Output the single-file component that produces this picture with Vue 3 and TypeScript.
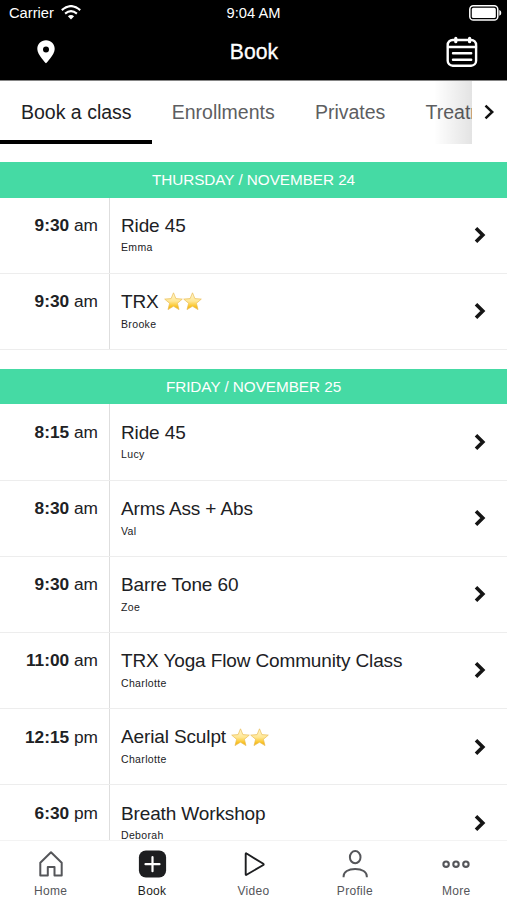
<script setup lang="ts">
interface ClassItem {
  time: string
  period: string
  title: string
  teacher: string
  stars?: number
}

interface Day {
  label: string
  classes: ClassItem[]
}

const tabs: string[] = ['Book a class', 'Enrollments', 'Privates', 'Treatments']

const days: Day[] = [
  {
    label: 'THURSDAY / NOVEMBER 24',
    classes: [
      { time: '9:30', period: 'am', title: 'Ride 45', teacher: 'Emma' },
      { time: '9:30', period: 'am', title: 'TRX', teacher: 'Brooke', stars: 2 },
    ],
  },
  {
    label: 'FRIDAY / NOVEMBER 25',
    classes: [
      { time: '8:15', period: 'am', title: 'Ride 45', teacher: 'Lucy' },
      { time: '8:30', period: 'am', title: 'Arms Ass + Abs', teacher: 'Val' },
      { time: '9:30', period: 'am', title: 'Barre Tone 60', teacher: 'Zoe' },
      { time: '11:00', period: 'am', title: 'TRX Yoga Flow Community Class', teacher: 'Charlotte' },
      { time: '12:15', period: 'pm', title: 'Aerial Sculpt', teacher: 'Charlotte', stars: 2 },
      { time: '6:30', period: 'pm', title: 'Breath Workshop', teacher: 'Deborah' },
    ],
  },
]

const navItems: string[] = ['Home', 'Book', 'Video', 'Profile', 'More']
</script>

<template>
  <div class="screen">
    <header class="top">
      <div class="status">
        <div class="carrier">
          <span>Carrier</span>
          <svg class="wifi" width="20" height="15" viewBox="0 0 20 15" fill="none" stroke="#fff" stroke-width="2.1">
            <path d="M.8 5.1Q10-3 19.2 5.1" />
            <path d="M4.1 8.6q5.9-4.9 11.8 0" />
            <path d="M6.9 11.3Q10 8.8 13.1 11.3L10 14.5Z" fill="#fff" stroke="none" />
          </svg>
        </div>
        <span class="clock">9:04 AM</span>
        <svg class="battery" width="33" height="16" viewBox="0 0 33 16">
          <rect x=".8" y=".8" width="28" height="14.2" rx="3.6" fill="none" stroke="#fff" stroke-width="1.5" />
          <rect x="2.8" y="2.8" width="24" height="10.2" rx="1.6" fill="#fff" />
          <path d="M30.3 5q2 .8 2 2.9t-2 2.9Z" fill="#fff" />
        </svg>
      </div>
      <div class="titlebar">
        <svg class="pin" width="18" height="24" viewBox="0 0 18 24">
          <path fill="#fff" fill-rule="evenodd" d="M9 .3C4 .3.3 4 .3 8.9.3 14.7 9 23.3 9 23.3s8.7-8.6 8.7-14.4C17.7 4 14 .3 9 .3Zm0 6.2a3 3 0 1 1 0 6 3 3 0 0 1 0-6Z" />
        </svg>
        <h1>Book</h1>
        <svg class="calendar" width="32" height="32" viewBox="0 0 32 32" fill="none" stroke="#fff" stroke-width="2.4" stroke-linecap="round">
          <rect x="1.7" y="4" width="28.4" height="25.7" rx="5" />
          <path d="M2 11h28M7 17.3h18.2M7 23.7h18.2" />
          <path d="M9.8 2.3v3.4M23.6 2.3v3.4" stroke-width="3.2" />
        </svg>
      </div>
    </header>

    <nav class="tabs">
      <div class="tab-track">
        <span v-for="(tab, i) in tabs" :key="tab" class="tab" :class="{ active: i === 0 }">{{ tab }}</span>
      </div>
      <div class="tab-next">
        <svg width="11" height="16" viewBox="0 0 11 16" fill="none" stroke="#111" stroke-width="2.5">
          <path d="M1.5 1.6 8.2 8l-6.7 6.4" />
        </svg>
      </div>
    </nav>

    <main class="schedule">
      <section v-for="day in days" :key="day.label" class="day">
        <h2>{{ day.label }}</h2>
        <div v-for="item in day.classes" :key="item.time + item.title" class="row">
          <div class="time"><b>{{ item.time }}</b> {{ item.period }}</div>
          <div class="info">
            <div class="name">
              <span>{{ item.title }}</span>
              <span v-if="item.stars" class="stars">
                <svg v-for="n in item.stars" :key="n" width="19" height="19" viewBox="0 0 19 19">
                  <defs>
                    <linearGradient id="starFill" x1="0" y1="0" x2="0" y2="1">
                      <stop offset="0" stop-color="#fff6d0" />
                      <stop offset=".5" stop-color="#ffe795" />
                      <stop offset=".8" stop-color="#fbc62a" />
                      <stop offset="1" stop-color="#eda90c" />
                    </linearGradient>
                  </defs>
                  <path
                    d="m9.5.8 2.4 5.8 6.4.5-4.9 4.2 1.6 6.3-5.5-3.4L4 17.6l1.6-6.3L.7 7.1l6.4-.5Z"
                    fill="url(#starFill)"
                    stroke="#e9bd55"
                    stroke-width=".7"
                    stroke-linejoin="round"
                  />
                </svg>
              </span>
            </div>
            <div class="teacher">{{ item.teacher }}</div>
          </div>
          <svg class="go" width="12" height="18" viewBox="0 0 12 18" fill="none" stroke="#151515" stroke-width="3.6">
            <path d="M2 2.3 8.8 9 2 15.7" />
          </svg>
        </div>
      </section>
    </main>

    <footer class="bottom">
      <div v-for="item in navItems" :key="item" class="nav" :class="{ selected: item === 'Book' }">
        <svg width="30" height="30" viewBox="0 0 30 30" fill="none" stroke="#55565a" stroke-width="2">
          <path v-if="item === 'Home'" d="M4.3 13.8 15 3.3l10.7 10.5v12.6h-7.2v-8.5h-6.7v8.5H4.3Z" stroke-linejoin="round" />
          <template v-else-if="item === 'Book'">
            <rect x="1.9" y="1.4" width="27.2" height="27.2" rx="7" fill="#1d1e20" stroke="none" />
            <path d="M15.5 8.2v14M8.5 15.2h14" stroke="#fff" stroke-width="2.2" stroke-linecap="round" />
          </template>
          <path v-else-if="item === 'Video'" d="M6.7 4.9v20.4q0 1 .9.4L24.3 16q.8-.6 0-1.2L7.6 4.5q-.9-.6-.9.4Z" stroke="#1d1e20" stroke-width="1.9" />
          <template v-else-if="item === 'Profile'">
            <ellipse cx="15.2" cy="8.2" rx="5.3" ry="6.1" />
            <path d="M3.6 28.2v-1c0-4.3 4.5-7.2 11.6-7.2s11.6 2.9 11.6 7.2v1" />
          </template>
          <template v-else>
            <circle cx="5.1" cy="15.2" r="2.7" stroke-width="2.1" />
            <circle cx="15" cy="15.2" r="2.7" stroke-width="2.1" />
            <circle cx="24.9" cy="15.2" r="2.7" stroke-width="2.1" />
          </template>
        </svg>
        <span>{{ item }}</span>
      </div>
    </footer>
  </div>
</template>

<style>
body {
  background: #fff;
}
</style>

<style scoped>
.screen {
  display: flex;
  flex-direction: column;
  width: 507px;
  height: 900px;
  overflow: hidden;
  background: #fff;
  color: #202124;
  font-family: "Liberation Sans", Arial, sans-serif;
}

svg {
  display: block;
  flex: none;
}

.top {
  flex: none;
  height: 80px;
  background: #000;
  color: #fff;
}

.status {
  display: grid;
  grid-template-columns: 1fr auto 1fr;
  align-items: center;
  height: 25px;
  padding: 0 5px 0 9px;
  font-size: 14.7px;
}

.carrier {
  display: flex;
  align-items: center;
  gap: 7px;
}

.clock {
  margin-left: -4px;
}

.battery {
  justify-self: end;
}

.titlebar {
  display: grid;
  grid-template-columns: 1fr auto 1fr;
  align-items: center;
  height: 54px;
  padding: 0 29px 0 37px;
}

h1 {
  margin: 0 0 0 -7px;
  font-size: 21.2px;
  font-weight: 400;
  -webkit-text-stroke: 0.3px currentColor;
}

.calendar {
  justify-self: end;
}

.tabs {
  display: flex;
  flex: none;
  height: 64px;
  border-top: 1px solid #858585;
  box-sizing: border-box;
}

.tab-track {
  position: relative;
  display: flex;
  width: 472px;
  overflow: hidden;
}

.tab-track::after {
  position: absolute;
  top: 0;
  right: 0;
  width: 38px;
  height: 100%;
  background: linear-gradient(90deg, rgba(0, 0, 0, 0), rgba(0, 0, 0, 0.11));
  content: "";
}

.tab {
  flex: none;
  padding: 0 20.1px;
  border-bottom: 4px solid transparent;
  color: #5d5e61;
  font-size: 19.5px;
  line-height: 62px;
  box-sizing: border-box;
}

.tab.active {
  border-color: #000;
  color: #202124;
  padding-left: 21px;
}

.tab-next {
  display: flex;
  flex: 1;
  justify-content: center;
  padding-top: 23px;
}

.schedule {
  flex: 1;
  min-height: 0;
  padding-top: 18px;
  overflow: hidden;
}

.day {
  margin-bottom: 19px;
}

h2 {
  margin: 0;
  height: 35.5px;
  background: #45daa4;
  color: #fff;
  font-size: 15.3px;
  font-weight: 400;
  line-height: 36px;
  letter-spacing: -0.05px;
  text-align: center;
}

.row {
  display: flex;
  height: 76.2px;
  border-bottom: 1px solid #ededed;
  box-sizing: border-box;
}

.time {
  width: 109.5px;
  padding: 17.5px 10.5px 0 0;
  border-right: 1px solid #dedede;
  box-sizing: border-box;
  font-size: 17.3px;
  line-height: 20px;
  text-align: right;
}

.info {
  flex: 1;
  padding: 17.2px 0 0 11.5px;
}

.name {
  display: flex;
  gap: 5px;
  font-size: 19px;
  line-height: 22px;
  letter-spacing: -0.13px;
}

.stars {
  display: flex;
  align-items: center;
}

.teacher {
  margin-top: 3.8px;
  font-size: 10.5px;
  line-height: 14px;
  letter-spacing: 0.35px;
}

.go {
  margin: 28.5px 21px 0 0;
}

.bottom {
  display: flex;
  flex: none;
  height: 60px;
  border-top: 1px solid #f3f3f3;
  box-sizing: border-box;
  background: #fff;
}

.nav {
  display: flex;
  flex: 1;
  flex-direction: column;
  align-items: center;
  padding-top: 7.5px;
  color: #55565a;
  font-size: 12px;
  line-height: 14px;
  letter-spacing: 0.3px;
}

.nav span {
  margin-top: 5px;
}

.nav.selected {
  color: #1d1e20;
}
</style>
